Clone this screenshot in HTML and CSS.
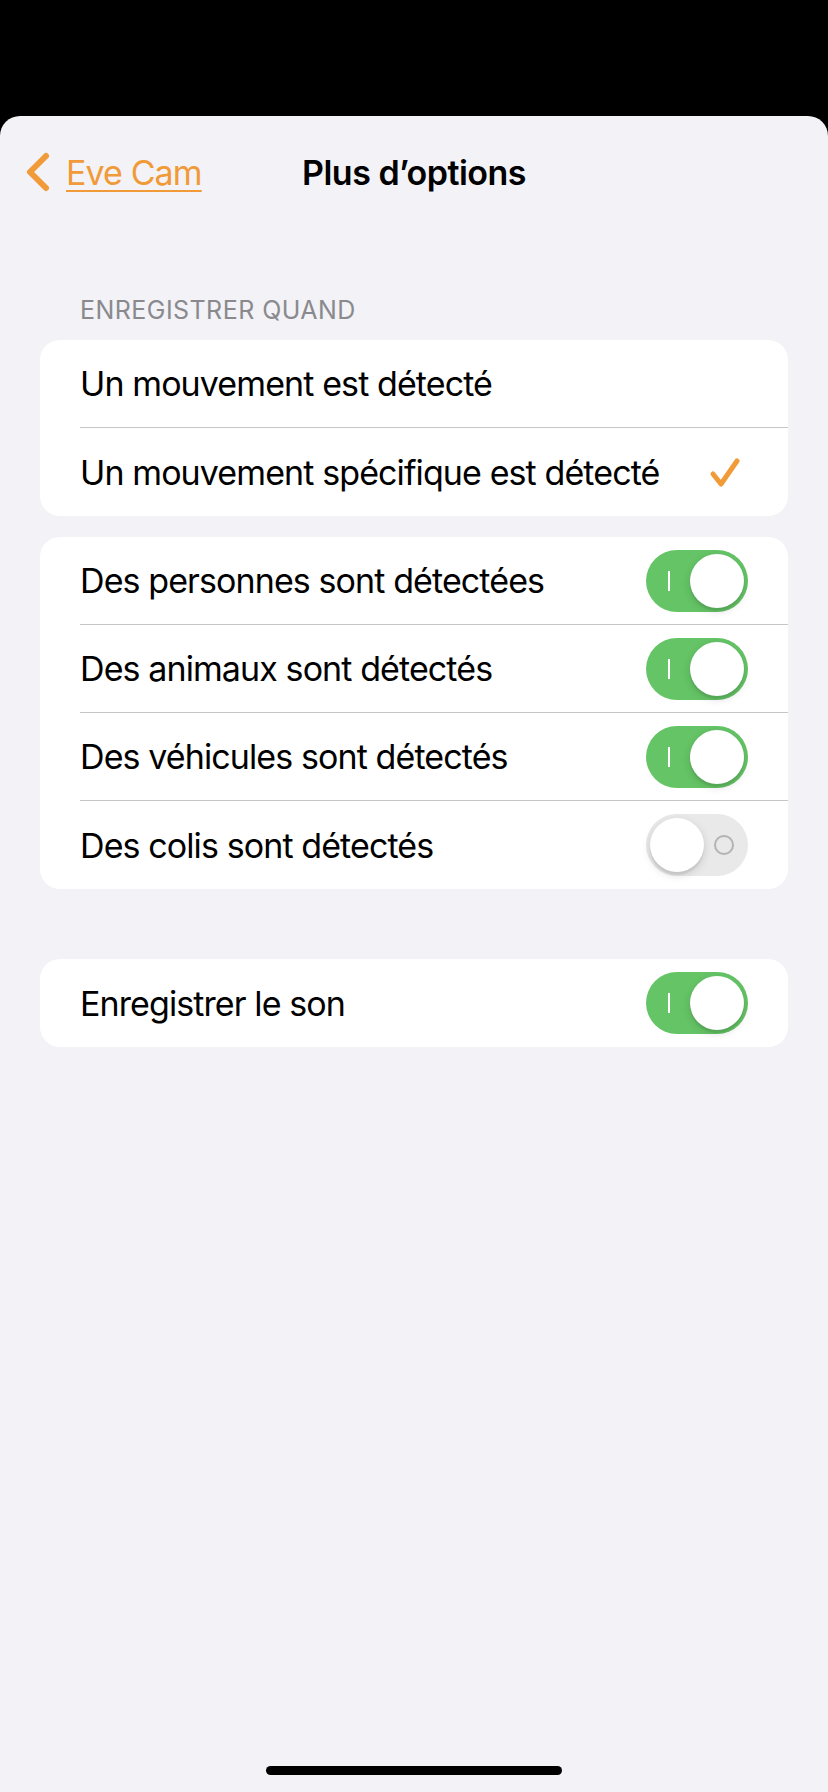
FILE: index.html
```html
<!DOCTYPE html>
<html lang="fr">
<head>
  <title>Plus d’options</title>
  <meta charset="UTF-8">
  <meta name="viewport" content="width=device-width, initial-scale=1.0">
  <link rel="stylesheet" href="styles.css">
</head>
<body>
  <div id="status-bar"></div>

  <div id="sheet">
    <div id="nav">
      <a class="back" href="#">
        <svg class="chevron" width="28" height="44" viewBox="0 0 28 44">
          <polyline points="22,6 6,22 22,38" fill="none" stroke="#f19a38" stroke-width="6" stroke-linecap="round" stroke-linejoin="round"/>
        </svg>
        <span class="back-label">Eve Cam</span>
      </a>
      <h1 class="title">Plus d’options</h1>
    </div>

    <div class="section-header">Enregistrer quand</div>
    <div class="card card-choice">
      <div class="row">
        <div class="row-inner">
          <span class="label">Un mouvement est détecté</span>
        </div>
      </div>
      <div class="row">
        <div class="row-inner">
          <span class="label">Un mouvement spécifique est détecté</span>
          <svg class="check" width="32" height="32" viewBox="0 0 32 32">
            <polyline points="4,18 12,28 28,5" fill="none" stroke="#f19a38" stroke-width="5" stroke-linecap="round" stroke-linejoin="round"/>
          </svg>
        </div>
      </div>
    </div>

    <div class="card card-types">
      <div class="row">
        <div class="row-inner">
          <span class="label">Des personnes sont détectées</span>
          <span class="switch on"><span class="knob"></span></span>
        </div>
      </div>
      <div class="row">
        <div class="row-inner">
          <span class="label">Des animaux sont détectés</span>
          <span class="switch on"><span class="knob"></span></span>
        </div>
      </div>
      <div class="row">
        <div class="row-inner">
          <span class="label">Des véhicules sont détectés</span>
          <span class="switch on"><span class="knob"></span></span>
        </div>
      </div>
      <div class="row">
        <div class="row-inner">
          <span class="label">Des colis sont détectés</span>
          <span class="switch off"><span class="knob"></span></span>
        </div>
      </div>
    </div>

    <div class="card card-sound">
      <div class="row">
        <div class="row-inner">
          <span class="label">Enregistrer le son</span>
          <span class="switch on"><span class="knob"></span></span>
        </div>
      </div>
    </div>

    <div id="home-indicator"></div>
  </div>
</body>
</html>
```

FILE: styles.css
```css
body {
  margin: 0;
  background-color: #000;
  font-family: 'Inter', 'Roboto', sans-serif;
  color: #000;
}

#status-bar {
  height: 116px;
}

#sheet {
  position: relative;
  min-height: 1676px;
  background-color: #f2f2f7;
  border-radius: 20px 20px 0 0;
  padding-top: 12px;
  box-sizing: border-box;
}

#nav {
  position: relative;
  height: 88px;
  display: flex;
  align-items: center;
  justify-content: center;
}

.back {
  position: absolute;
  left: 24px;
  top: 22px;
  display: flex;
  align-items: center;
  text-decoration: none;
  color: #f19a38;
}

.back-label {
  margin-left: 14px;
  font-size: 34px;
  letter-spacing: -0.9px;
  text-decoration: underline;
  text-decoration-thickness: 2px;
  text-underline-offset: 5px;
}

.title {
  margin: 0;
  font-size: 34px;
  font-weight: 600;
  letter-spacing: -0.5px;
}

.section-header {
  margin: 78px 80px 14px;
  line-height: 32px;
  font-size: 25px;
  letter-spacing: 0.45px;
  text-transform: uppercase;
  color: #8a8a8e;
}

.card {
  margin: 0 40px;
  background-color: #fff;
  border-radius: 20px;
  overflow: hidden;
}

.card-types {
  margin-top: 21px;
}

.card-sound {
  margin-top: 70px;
}

.row {
  padding-left: 40px;
}

.row-inner {
  height: 88px;
  box-sizing: border-box;
  padding-right: 40px;
  display: flex;
  align-items: center;
  justify-content: space-between;
  border-bottom: 1px solid #c6c6c8;
}

.row:last-child .row-inner {
  border-bottom: none;
}

.label {
  font-size: 34px;
  letter-spacing: -0.9px;
}

.check {
  margin-right: 7px;
}

/* interrupteurs iOS avec libellés I / O */
.switch {
  position: relative;
  width: 102px;
  height: 62px;
  border-radius: 31px;
  flex-shrink: 0;
}

.switch.on {
  background-color: #65c466;
}

.switch.off {
  background-color: #e9e9ea;
}

.switch.on::before {
  content: '';
  position: absolute;
  left: 22px;
  top: 21px;
  width: 2px;
  height: 20px;
  background-color: #fff;
}

.switch.off::before {
  content: '';
  position: absolute;
  left: 68px;
  top: 21px;
  width: 16px;
  height: 16px;
  border: 2px solid #b3b3b3;
  border-radius: 50%;
}

.knob {
  position: absolute;
  top: 4px;
  width: 54px;
  height: 54px;
  border-radius: 50%;
  background-color: #fff;
  box-shadow: 0 3px 8px rgba(0, 0, 0, 0.15), 0 3px 1px rgba(0, 0, 0, 0.06);
}

.switch.on .knob {
  right: 4px;
}

.switch.off .knob {
  left: 4px;
}

#home-indicator {
  position: absolute;
  left: 266px;
  bottom: 17px;
  width: 296px;
  height: 9px;
  border-radius: 5px;
  background-color: #000;
}
```
